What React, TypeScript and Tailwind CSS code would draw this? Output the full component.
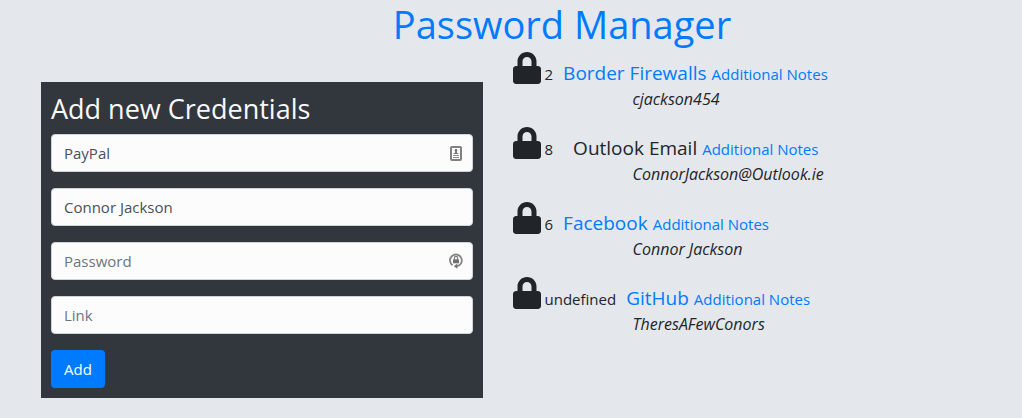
import { FaLock } from "react-icons/fa";

type Credential = { id: string; name: string; user: string; linked: boolean };

const credentials: Credential[] = [
  { id: "2", name: "Border Firewalls", user: "cjackson454", linked: true },
  { id: "8", name: "Outlook Email", user: "ConnorJackson@Outlook.ie", linked: false },
  { id: "6", name: "Facebook", user: "Connor Jackson", linked: true },
  { id: "undefined", name: "GitHub", user: "TheresAFewConors", linked: true },
];

const inputClass =
  "block h-[38px] w-full rounded border border-[#ced4da] bg-[#fcfcfd] px-3 text-[15px] text-[#495057] placeholder:text-[#6c757d] placeholder:opacity-100";

function ContactIcon() {
  return (
    <svg viewBox="0 0 12 15" className="h-[15px] w-3" fill="none" aria-hidden="true">
      <rect x="1" y="1" width="10" height="13" rx="1" stroke="#808080" strokeWidth="2" />
      <circle cx="6" cy="4.3" r="1.3" fill="#707070" />
      <path d="M5.2 5h1.6v1.6L9 8H3l2.2-1.4z" fill="#707070" />
      <path d="M3 9h6v1H3zM3 11h6v1H3z" fill="#909090" />
    </svg>
  );
}

function GenerateIcon() {
  return (
    <svg viewBox="0 0 14 16" className="h-4 w-3.5" fill="none" aria-hidden="true">
      <path d="M3.6 12.3A5.9 5.9 0 1 1 8 13.2" stroke="#858585" strokeWidth="1.8" />
      <path d="M8.4 10.6v5.2L4.8 13.2z" fill="#757575" />
      <rect x="4" y="6.2" width="6" height="4" rx=".5" fill="#707070" />
      <path d="M5.4 6.5V5a1.6 1.6 0 0 1 3.2 0v1.5" stroke="#757575" strokeWidth="1.1" />
    </svg>
  );
}

function CredentialForm() {
  return (
    <form className="bg-[#32373d] p-[10px]" onSubmit={(e) => e.preventDefault()}>
      <h2 className="mb-2 text-[27px] leading-[34px] text-[#f8f9fa]">Add new Credentials</h2>
      <div className="flex flex-col items-start gap-4">
        <div className="relative w-full">
          <input className={inputClass} aria-label="Name" placeholder="Name" defaultValue="PayPal" />
          <span className="absolute inset-y-0 right-[11px] flex items-center">
            <ContactIcon />
          </span>
        </div>
        <input className={inputClass} aria-label="Username" placeholder="Username" defaultValue="Connor Jackson" />
        <div className="relative w-full">
          <input className={inputClass} type="password" aria-label="Password" placeholder="Password" />
          <span className="absolute inset-y-0 right-[10px] flex items-center">
            <GenerateIcon />
          </span>
        </div>
        <input className={inputClass} aria-label="Link" placeholder="Link" />
        <button type="submit" className="h-[38px] rounded bg-[#007bff] px-[13px] text-[15px] text-white">
          Add
        </button>
      </div>
    </form>
  );
}

function CredentialRow({ item }: { item: Credential }) {
  return (
    <li className="text-[15px]">
      <div className="flex h-[39px] items-baseline leading-6">
        <FaLock className="mr-1 h-8 w-7 translate-y-1" aria-hidden="true" />
        <span>{item.id}</span>
        {item.linked ? (
          <a href="#" className="ml-[10px] text-[19px] text-[#007bff]">{item.name}</a>
        ) : (
          <span className="ml-5 text-[19px]">{item.name}</span>
        )}
        <a href="#" className="ml-[5px] text-[#007bff]">Additional Notes</a>
      </div>
      <p className="pl-[120px] text-base leading-6 italic">{item.user}</p>
    </li>
  );
}

export default function App() {
  return (
    <main className="min-h-screen bg-[#e4e7eb] pb-5 font-['Open_Sans','Noto_Sans',sans-serif] text-[#212529]">
      <h1 className="pl-[102px] text-center text-[38px] leading-12 text-[#007bff]">Password Manager</h1>
      <div className="grid grid-cols-[13fr_15fr] gap-[30px] pl-[41px]">
        <div className="pt-[34px]">
          <CredentialForm />
        </div>
        <ul className="flex flex-col gap-3">
          {credentials.map((item) => (
            <CredentialRow key={item.id} item={item} />
          ))}
        </ul>
      </div>
    </main>
  );
}
